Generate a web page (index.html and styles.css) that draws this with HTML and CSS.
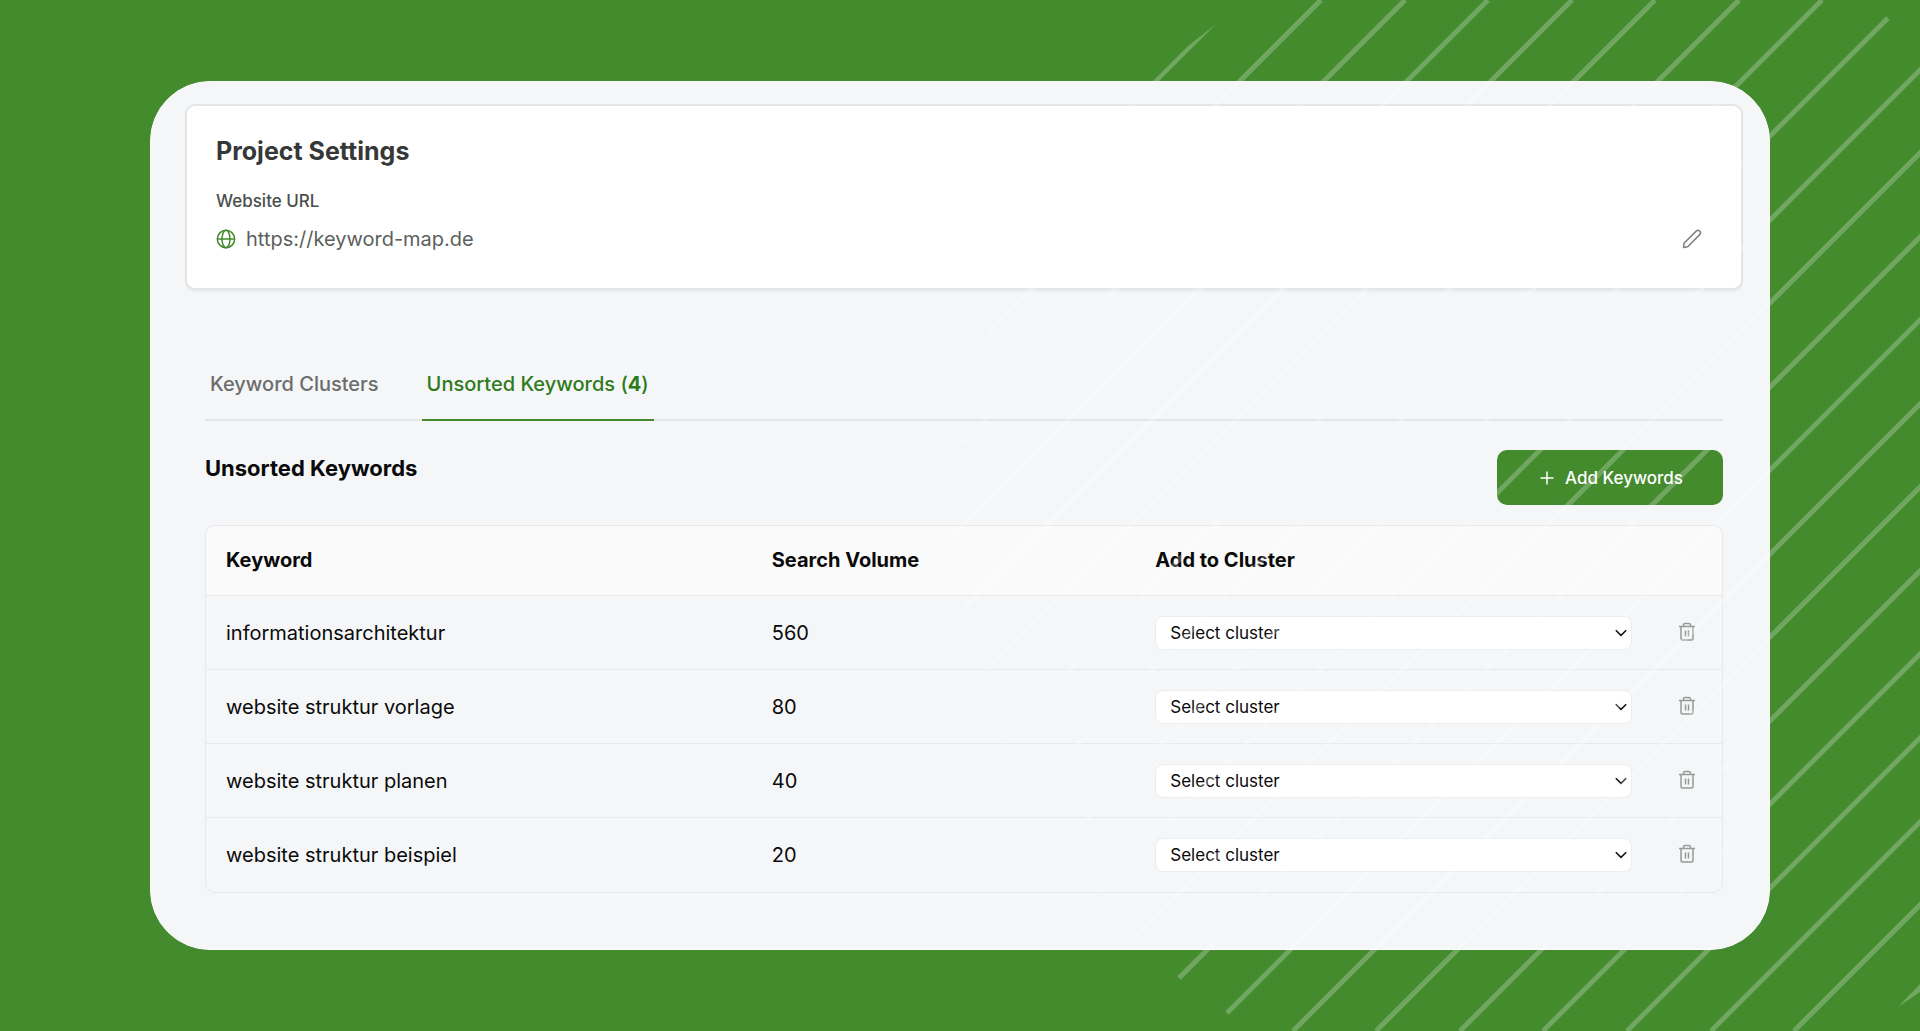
FILE: index.html
```html
<!DOCTYPE html>
<html lang="en">
<head>
<meta charset="utf-8">
<title>Project Settings</title>
<link rel="stylesheet" href="styles.css">
</head>
<body>
<svg class="icon-defs" aria-hidden="true">
  <symbol id="trash" viewBox="0 0 18 20">
    <path d="M1 4.500h16M5.500 4.500V3a1.500 1.500 0 0 1 1.500-1.500h4A1.500 1.500 0 0 1 12.500 3v1.500M3 4.500V16.500a1.500 1.500 0 0 0 1.500 1.500h9a1.500 1.500 0 0 0 1.500-1.500V4.500M7.500 8.500v6M10.500 8.500v6"/>
  </symbol>
</svg>
<main class="panel">
  <section class="settings">
    <h1 class="settings-title">Project Settings</h1>
    <h2 class="settings-label">Website URL</h2>
    <div class="url-row">
      <svg class="globe" viewBox="0 0 20 20" aria-hidden="true"><circle cx="10" cy="10" r="8.700"/><ellipse cx="10" cy="10" rx="4" ry="8.700"/><path d="M1.300 10h17.400"/></svg>
      <span class="url">https://keyword-map.de</span>
      <button class="icon-button edit" type="button" aria-label="Edit website URL">
        <svg viewBox="0 0 20 20" aria-hidden="true"><path d="M1.500 18.500l.5-4.200L14.200 2.100a2.400 2.400 0 0 1 3.500 3.500L5.700 17.800z"/></svg>
      </button>
    </div>
  </section>

  <section class="keywords">
    <nav class="tabs">
      <a class="tab" href="#clusters">Keyword Clusters</a>
      <a class="tab tab-active" href="#unsorted">Unsorted Keywords (<b>4</b>)</a>
    </nav>
    <div class="toolbar">
      <h2 class="toolbar-title">Unsorted Keywords</h2>
      <button class="add" type="button">
        <svg class="plus" viewBox="0 0 14 14" aria-hidden="true"><path d="M7 .5v13M.5 7h13"/></svg>
        Add Keywords
      </button>
    </div>
    <div class="table-frame">
      <table class="table">
        <colgroup><col class="col-keyword"><col class="col-volume"><col class="col-cluster"><col class="col-delete"></colgroup>
        <thead>
          <tr><th>Keyword</th><th>Search Volume</th><th>Add to Cluster</th><td></td></tr>
        </thead>
        <tbody>
          <tr><td>informationsarchitektur</td><td>560</td>
            <td><span class="select-wrap"><select class="select" aria-label="Cluster for informationsarchitektur"><option>Select cluster</option></select><svg class="chevron" viewBox="0 0 12 8" aria-hidden="true"><path d="M.8 1.200L6 6.400l5.200-5.200"/></svg></span></td>
            <td class="cell-delete"><button class="icon-button delete" type="button" aria-label="Delete informationsarchitektur"><svg aria-hidden="true"><use href="#trash"/></svg></button></td></tr>
          <tr><td>website struktur vorlage</td><td>80</td>
            <td><span class="select-wrap"><select class="select" aria-label="Cluster for website struktur vorlage"><option>Select cluster</option></select><svg class="chevron" viewBox="0 0 12 8" aria-hidden="true"><path d="M.8 1.200L6 6.400l5.200-5.200"/></svg></span></td>
            <td class="cell-delete"><button class="icon-button delete" type="button" aria-label="Delete website struktur vorlage"><svg aria-hidden="true"><use href="#trash"/></svg></button></td></tr>
          <tr><td>website struktur planen</td><td>40</td>
            <td><span class="select-wrap"><select class="select" aria-label="Cluster for website struktur planen"><option>Select cluster</option></select><svg class="chevron" viewBox="0 0 12 8" aria-hidden="true"><path d="M.8 1.200L6 6.400l5.200-5.200"/></svg></span></td>
            <td class="cell-delete"><button class="icon-button delete" type="button" aria-label="Delete website struktur planen"><svg aria-hidden="true"><use href="#trash"/></svg></button></td></tr>
          <tr><td>website struktur beispiel</td><td>20</td>
            <td><span class="select-wrap"><select class="select" aria-label="Cluster for website struktur beispiel"><option>Select cluster</option></select><svg class="chevron" viewBox="0 0 12 8" aria-hidden="true"><path d="M.8 1.200L6 6.400l5.200-5.200"/></svg></span></td>
            <td class="cell-delete"><button class="icon-button delete" type="button" aria-label="Delete website struktur beispiel"><svg aria-hidden="true"><use href="#trash"/></svg></button></td></tr>
        </tbody>
      </table>
    </div>
  </section>
</main>
<!-- Decorative diagonal stripes, anchored to the top right corner -->
<svg class="stripes" viewBox="0 0 960 1031" aria-hidden="true">
  <path class="taper" d="M256 24L228 46 40 234h6z"/>
  <path d="M361 0L28 333M445 0L2 443M528 0L-5 533M612 0L5 607M695 0L25 670M779 0L42 737M862 0L87 775M928 18L102 844M1030 0L138 892M1113 0L174 939M1197 0L219 978M1280 0L267 1013M1364 0L333 1031M1447 0L416 1031M1531 0L500 1031M1614 0L583 1031M1698 0L667 1031M1782 0L751 1031M1865 0L834 1031"/>
  <path class="taper" d="M938 1007l22-23v8z"/>
</svg>
</body>
</html>
```
FILE: styles.css
```css
* { box-sizing: border-box; }

body {
  margin: 0;
  min-height: 100vh;
  padding: 81px 150px;
  background: #448b2e;
  color: #0a0a0a;
  font-family: Inter, "Liberation Sans", sans-serif;
  font-size: 20px;
  line-height: 28px;
  overflow-x: hidden;
}

h1, h2 { margin: 0; }

.icon-defs { position: absolute; width: 0; height: 0; }

.panel {
  padding: 22px 26px 56px 34px;
  border: 1px solid #fbfcfd;
  border-radius: 60px;
  background: #f5f6f8;
}

.settings {
  padding: 29px 30px 35px 29px;
  border: 2px solid #e4e5e6;
  border-radius: 10px;
  background: #fff;
  box-shadow: 0 2px 2px rgba(0, 0, 0, 0.04);
}

.settings-title { font-size: 25px; line-height: 32px; font-weight: 700; color: #353836; }
.settings-label { margin-top: 22px; font-size: 17px; line-height: 24px; font-weight: 500; color: #4b4e4c; }
.url-row { display: flex; align-items: center; margin-top: 12px; }
.globe { width: 20px; height: 20px; fill: none; stroke: #448b2e; stroke-width: 1.500; }
.url { flex: 1; margin-left: 10px; color: #5c5f5d; }

.icon-button { display: inline-flex; padding: 0; border: 0; background: none; }
.icon-button svg { fill: none; stroke-linejoin: round; stroke-width: 1.500; }
.edit { margin-right: 9px; }
.edit svg { width: 20px; height: 20px; stroke: #7d807e; }

.keywords { padding: 62px 20px 0; }

.tabs { display: flex; gap: 38px; border-bottom: 2px solid #e4e5e7; }
.tab {
  margin-bottom: -2px;
  padding: 18px 5px 21px;
  border-bottom: 2px solid transparent;
  color: #6b6d6c;
  font-weight: 500;
  text-decoration: none;
}
.tab-active { border-color: #448b2e; color: #2f7a1b; }

.toolbar { display: flex; justify-content: space-between; align-items: flex-start; margin-top: 29px; }
.toolbar-title { margin-top: 4px; font-size: 22px; line-height: 28px; font-weight: 700; }
.add {
  display: flex;
  align-items: center;
  gap: 11px;
  height: 55px;
  padding: 0 40px 0 43px;
  border: 0;
  border-radius: 10px;
  background: #448b2e;
  color: #fff;
  font: 500 17px/24px Inter, "Liberation Sans", sans-serif;
}
.plus { width: 14px; height: 14px; fill: none; stroke: #fff; stroke-width: 1.500; }

.table-frame { margin-top: 20px; overflow: hidden; border: 1px solid #e8e9eb; border-radius: 10px; }
.table { width: 100%; border-collapse: separate; border-spacing: 0; table-layout: fixed; }
.col-keyword { width: 36%; }
.col-volume { width: 25.3%; }
.col-delete { width: 70px; }
.table th, .table td { height: 74px; padding: 0 20px; border-bottom: 1px solid #e8e9eb; text-align: left; }
.table thead tr { background: #fafafa; }
.table thead th, .table thead td { height: 70px; padding-bottom: 2px; font-weight: 700; }
.table tbody tr:last-child td { border-bottom: 0; }
.table .cell-delete { padding: 0 26px 2px 0; }

.select-wrap { position: relative; display: block; }
.select {
  display: block;
  width: 100%;
  height: 34px;
  padding: 0 14px;
  appearance: none;
  border: 1px solid #ebecee;
  border-radius: 8px;
  background: #fff;
  color: #0a0a0a;
  font: 400 17px/24px Inter, "Liberation Sans", sans-serif;
}
.chevron { position: absolute; top: 13px; right: 5px; width: 12px; height: 8px; fill: none; stroke: #111; stroke-width: 1.500; pointer-events: none; }
.delete { display: flex; margin-left: auto; }
.delete svg { width: 18px; height: 20px; stroke: #979a98; }

.stripes {
  position: absolute;
  top: 0;
  right: 0;
  width: 960px;
  height: 1031px;
  overflow: visible;
  fill: none;
  stroke: #fff;
  stroke-width: 5;
  opacity: 0.24;
  pointer-events: none;
}
.taper { fill: #fff; stroke: none; }
```
